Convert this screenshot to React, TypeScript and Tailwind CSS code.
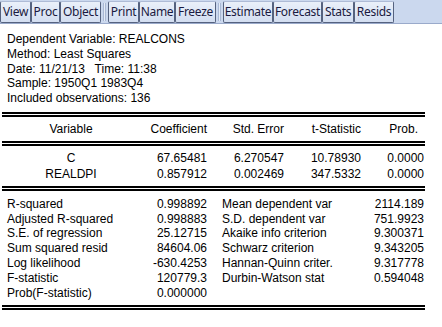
import React from 'react';

type Btn = { label: string; w: string } | null;

const buttons: Btn[] = [
  { label: 'View', w: 'w-[31px]' },
  { label: 'Proc', w: 'w-[29px]' },
  { label: 'Object', w: 'w-[41px]' },
  null,
  { label: 'Print', w: 'w-[31px]' },
  { label: 'Name', w: 'w-[36px]' },
  { label: 'Freeze', w: 'w-[41px]' },
  null,
  { label: 'Estimate', w: 'w-[50px]' },
  { label: 'Forecast', w: 'w-[49px]' },
  { label: 'Stats', w: 'w-[32px]' },
  { label: 'Resids', w: 'w-[40px]' },
];

const header = [
  'Dependent Variable: REALCONS',
  'Method: Least Squares',
  'Date: 11/21/13   Time: 11:38',
  'Sample: 1950Q1 1983Q4',
  'Included observations: 136',
];

const coefs = [
  ['C', '67.65481', '6.270547', '10.78930', '0.0000'],
  ['REALDPI', '0.857912', '0.002469', '347.5332', '0.0000'],
];

const stats = [
  ['R-squared', '0.998892', 'Mean dependent var', '2114.189'],
  ['Adjusted R-squared', '0.998883', 'S.D. dependent var', '751.9923'],
  ['S.E. of regression', '25.12715', 'Akaike info criterion', '9.300371'],
  ['Sum squared resid', '84604.06', 'Schwarz criterion', '9.343205'],
  ['Log likelihood', '-630.4253', 'Hannan-Quinn criter.', '9.317778'],
  ['F-statistic', '120779.3', 'Durbin-Watson stat', '0.594048'],
  ['Prob(F-statistic)', '0.000000', '', ''],
];

function DoubleRule() {
  return (
    <div className="flex flex-col gap-[1px] w-[423px] ml-[2px]">
      <div className="h-[2px] bg-black" />
      <div className="h-[2px] bg-black" />
    </div>
  );
}

export default function App() {
  return (
    <div className="w-[442px] h-[327px] bg-white overflow-hidden font-['Liberation_Sans',Arial,sans-serif] text-[12px] text-black">
      {/* Toolbar */}
      <div className="flex items-center h-[24px] bg-[#cbd8ee] border-b border-[#9aaacb] font-['Noto_Sans','Open_Sans',sans-serif] text-[12px] text-[#1a1a40] tracking-[-0.3px]">
        {buttons.map((b, i) =>
          b ? (
            <div
              key={i}
              className={`${b.w} h-[22px] flex items-center justify-center rounded-[2px] border border-[#55627f] border-t-[#aebbd6] bg-gradient-to-b from-[#eaf0fa] to-[#d3def1]`}
            >
              {b.label}
            </div>
          ) : (
            <div key={i} className="w-[7px] h-[22px] flex items-center justify-center">
              <div className="w-[3px] h-[18px] border-x border-[#a9b8d4] bg-[#e4ebf6]" />
            </div>
          )
        )}
      </div>

      {/* Estimation header */}
      <div className="pt-[8px] pl-[7px] leading-[14.75px] whitespace-pre">
        {header.map((h) => (
          <div key={h}>{h}</div>
        ))}
      </div>

      <div className="mt-[6px]">
        <DoubleRule />
      </div>

      {/* Coefficient table header */}
      <div className="flex items-center h-[24px] ml-[2px]">
        <div className="w-[138px] text-center">Variable</div>
        <div className="w-[67px] text-right">Coefficient</div>
        <div className="w-[77px] text-right">Std. Error</div>
        <div className="w-[77px] text-right">t-Statistic</div>
        <div className="w-[63px] text-right pr-[6px]">Prob.</div>
      </div>
      <DoubleRule />

      <div className="pt-[4px] leading-[16px] ml-[2px]">
        {coefs.map((r) => (
          <div key={r[0]} className="flex">
            <div className="w-[138px] text-center">{r[0]}</div>
            <div className="w-[67px] text-right">{r[1]}</div>
            <div className="w-[77px] text-right">{r[2]}</div>
            <div className="w-[77px] text-right">{r[3]}</div>
            <div className="w-[63px] text-right">{r[4]}</div>
          </div>
        ))}
      </div>

      <div className="mt-[4px]">
        <DoubleRule />
      </div>

      {/* Summary statistics */}
      <div className="pt-[6px] leading-[14.8px]">
        {stats.map((r, i) => (
          <div key={i} className="flex h-[14.8px]">
            <div className="w-[122px] pl-[7px]">{r[0]}</div>
            <div className="w-[85px] text-right">{r[1]}</div>
            <div className="w-[137px] pl-[15px]">{r[2]}</div>
            <div className="w-[80px] text-right">{r[3]}</div>
          </div>
        ))}
      </div>

      <div className="mt-[5px]">
        <DoubleRule />
      </div>
    </div>
  );
}
